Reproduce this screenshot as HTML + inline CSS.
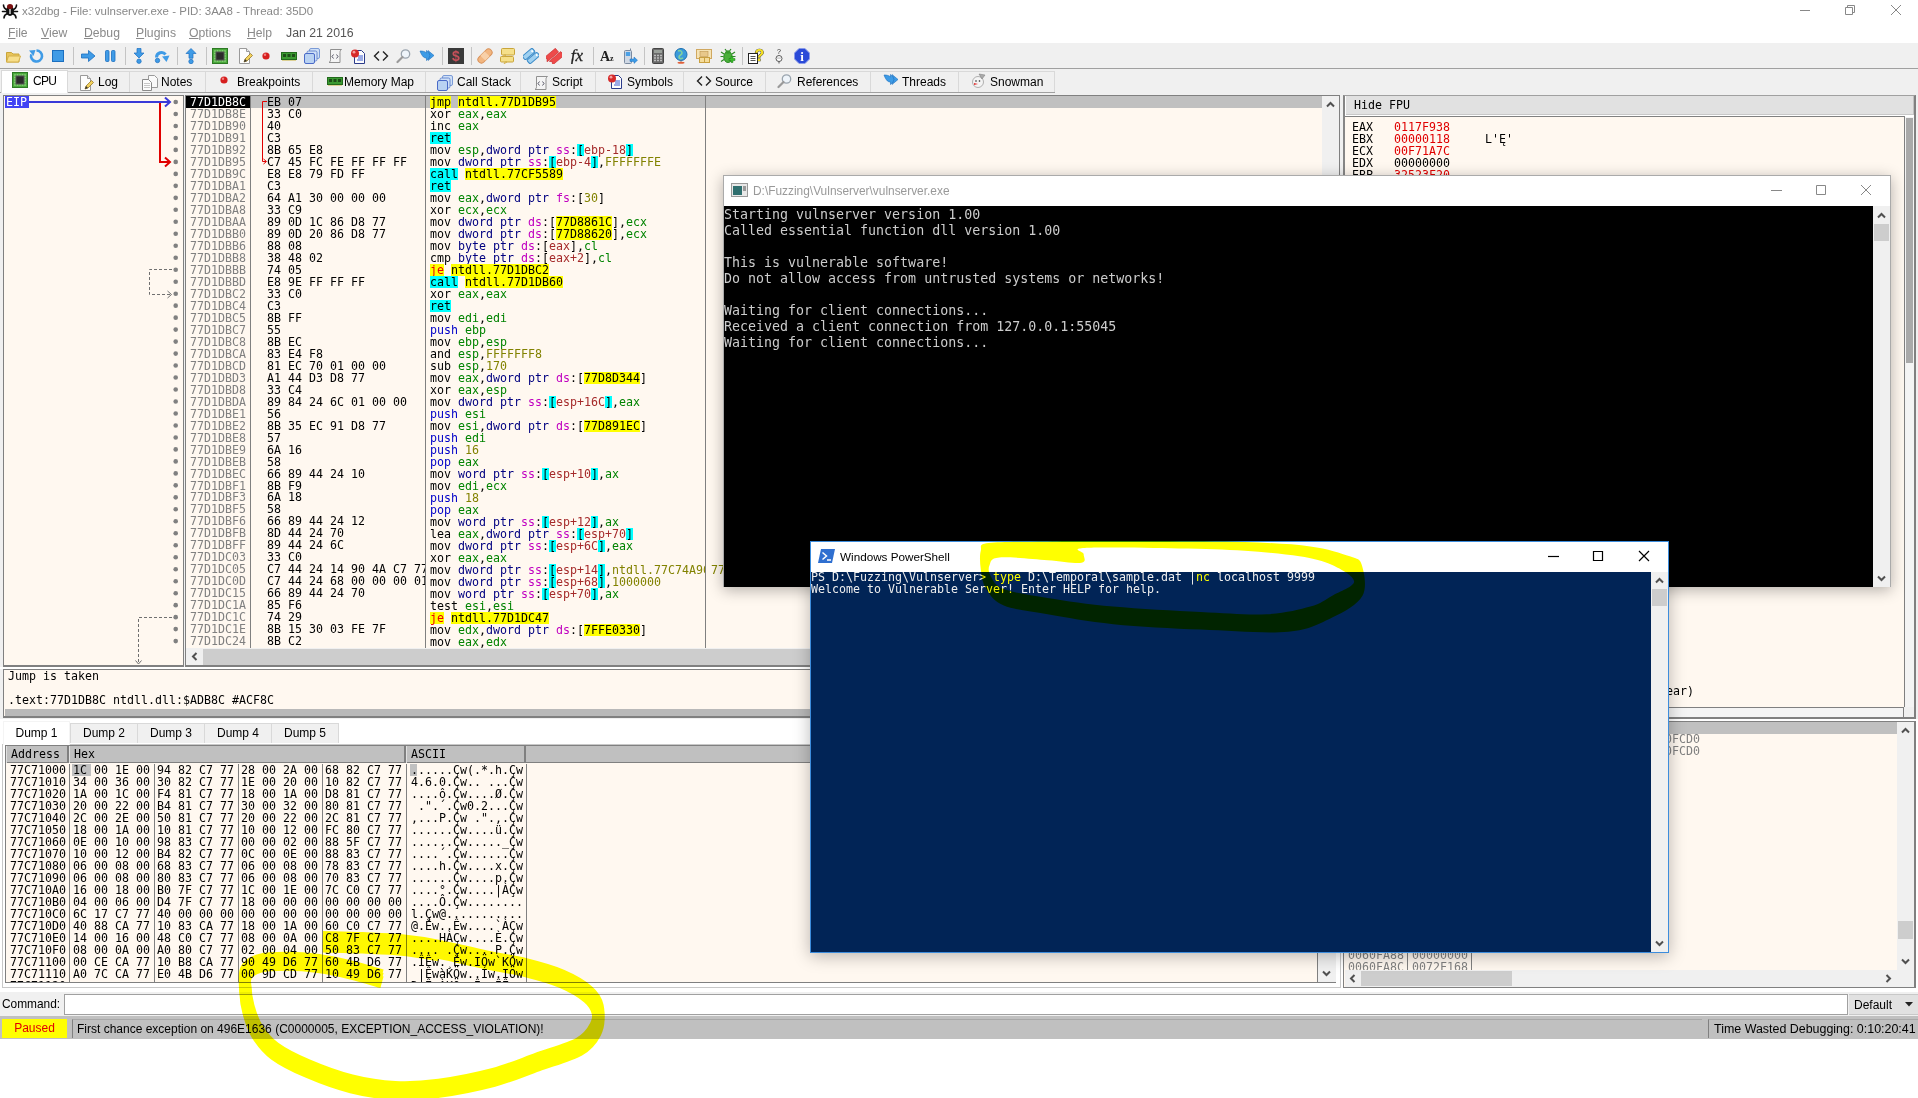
<!DOCTYPE html><html><head><meta charset="utf-8"><title>x32dbg</title><style>
*{box-sizing:border-box}
html,body{margin:0;padding:0}
body{width:1918px;height:1098px;overflow:hidden;background:#fff;position:relative;font-family:"Liberation Sans","DejaVu Sans",sans-serif;font-size:12px;color:#000}
.abs{position:absolute}
.mono{font-family:"DejaVu Sans Mono","Liberation Mono",monospace;font-size:11.63px;line-height:12px;white-space:pre;letter-spacing:0}
.ui{font-family:"Liberation Sans","DejaVu Sans",sans-serif;font-size:12px;white-space:pre}
.pane{position:absolute;background:#fff8f0}
.row{position:absolute;left:0;height:12px;white-space:pre}
.dis{line-height:11.98px}
.g{color:#808080}
.y,.c,.je{display:inline-block;height:12px;line-height:12px;vertical-align:top}
.y{background:#ffff00}
.c{background:#00ffff}
.p2{color:#000080}
.r{color:#008300}
.m{color:#c000c0}
.k{color:#828200}
.s{color:#a52a2a}
.p{color:#0000c8}
.je{color:#ef0000;background:#ffff00}
.tab{position:absolute;top:71px;height:21px;border:1px solid #d9d9d9;border-bottom:none;background:#f0f0f0;font-size:12px;line-height:20px;white-space:pre}
.tab.sel{top:70px;height:23px;background:#fff;border-color:#d9d9d9;z-index:2}
.dtab{position:absolute;top:723px;height:20px;border:1px solid #d9d9d9;border-bottom:none;background:#f0f0f0;font-size:12px;line-height:19px;text-align:center}
.hdr{position:absolute;background:#c0c0c0;border-right:2px solid #808080;height:16px}
.sb{position:absolute;background:#f0f0f0}
.thumb{position:absolute;background:#cdcdcd}
.con{font-family:"DejaVu Sans Mono","Liberation Mono",monospace;font-size:13.3px;line-height:16px;white-space:pre;color:#ccc}
</style></head><body><div class="abs" style="left:0;top:0;width:1918px;height:43px;background:#fff"></div>
<div class="abs ui" style="left:22px;top:5px;color:#888;font-size:11.5px">x32dbg - File: vulnserver.exe - PID: 3AA8 - Thread: 35D0</div>
<svg class="abs" style="left:1px;top:1px" width="18" height="18" viewBox="0 0 18 18"><g stroke="#111" stroke-width="1.6" fill="none" stroke-linecap="round"><path d="M2.500 4c0 3 1.500 4 4 5M15.500 4c0 3-1.500 4-4 5M1.500 10.500h4M16.500 10.500h-4M3 17c0-2.500 1-3.500 3.500-4.500M15 17c0-2.500-1-3.500-3.500-4.500"/></g><ellipse cx="9" cy="10" rx="4" ry="5" fill="#111"/><ellipse cx="9" cy="5.5" rx="3" ry="2.6" fill="#7a1010"/><rect x="8.3" y="8" width="1.4" height="5" fill="#ddd"/></svg>
<svg class="abs" style="left:1780px;top:0" width="138" height="22" viewBox="0 0 138 22" fill="none" stroke="#888" stroke-width="1"><path d="M20 10.5h10"/><path d="M65.5 7.5h7v7h-7zM67.5 7.5v-2h7v7h-2"/><path d="M111 5l10 10M121 5l-10 10"/></svg>
<div class="abs ui" style="left:8px;top:26px;color:#8a8a8a;font-size:12.2px"><u>F</u>ile</div>
<div class="abs ui" style="left:41px;top:26px;color:#8a8a8a;font-size:12.2px"><u>V</u>iew</div>
<div class="abs ui" style="left:84px;top:26px;color:#8a8a8a;font-size:12.2px"><u>D</u>ebug</div>
<div class="abs ui" style="left:136px;top:26px;color:#8a8a8a;font-size:12.2px"><u>P</u>lugins</div>
<div class="abs ui" style="left:189px;top:26px;color:#8a8a8a;font-size:12.2px"><u>O</u>ptions</div>
<div class="abs ui" style="left:247px;top:26px;color:#8a8a8a;font-size:12.2px"><u>H</u>elp</div>
<div class="abs ui" style="left:286px;top:26px;color:#555;font-size:12.3px">Jan 21 2016</div>
<div class="abs" style="left:0;top:43px;width:1918px;height:26px;background:#f0f0f0;border-bottom:1px solid #a0a0a0"></div>
<div class="abs" style="left:0;top:69px;width:1918px;height:971px;background:#f0f0f0"></div>
<svg class="abs" style="z-index:3;left:5px;top:48px" width="16" height="16" viewBox="0 0 16 16"><path d="M1.500 4.500h5l1.500 1.500h6v8h-12.500z" fill="#e8c45a" stroke="#c9a53a"/><path d="M1.500 14l2-6h12l-2 6z" fill="#f7de8a" stroke="#d4b04a"/></svg>
<svg class="abs" style="z-index:3;left:28px;top:48px" width="16" height="16" viewBox="0 0 16 16"><path d="M8.500 2.500a5.500 5.500 0 1 1-5.200 3.800" fill="none" stroke="#3f9be6" stroke-width="2.600"/><path d="M1 2.500l6.500-.5-2 6z" fill="#3f9be6"/></svg>
<svg class="abs" style="z-index:3;left:50px;top:48px" width="16" height="16" viewBox="0 0 16 16"><rect x="2.500" y="2.500" width="11" height="11" fill="#3f9be6" stroke="#1b6fc0"/></svg>
<div class="abs" style="left:73px;top:47px;width:1px;height:18px;background:#c4c4c4"></div>
<svg class="abs" style="z-index:3;left:80px;top:48px" width="16" height="16" viewBox="0 0 16 16"><path d="M1.500 6h7V2.500l6.500 5.500-6.500 5.500V10h-7z" fill="#3f9be6" stroke="#1b6fc0" stroke-width=".8"/></svg>
<svg class="abs" style="z-index:3;left:102px;top:48px" width="16" height="16" viewBox="0 0 16 16"><rect x="3.500" y="2.500" width="3.500" height="11" rx="1" fill="#3f9be6" stroke="#1b6fc0" stroke-width=".8"/><rect x="9.500" y="2.500" width="3.500" height="11" rx="1" fill="#3f9be6" stroke="#1b6fc0" stroke-width=".8"/></svg>
<div class="abs" style="left:125px;top:47px;width:1px;height:18px;background:#c4c4c4"></div>
<svg class="abs" style="z-index:3;left:131px;top:48px" width="16" height="16" viewBox="0 0 16 16"><path d="M6 .5h4v4.500h3l-5 5-5-5h3z" fill="#3f9be6" stroke="#1b6fc0" stroke-width=".7"/><circle cx="8" cy="13.200" r="2.200" fill="#3f9be6" stroke="#1b6fc0" stroke-width=".7"/></svg>
<svg class="abs" style="z-index:3;left:154px;top:48px" width="16" height="16" viewBox="0 0 16 16"><path d="M2.500 9.500a5 5 0 0 1 9-3" fill="none" stroke="#3f9be6" stroke-width="3"/><path d="M8 8.500l7.500-1-3 6.500z" fill="#3f9be6"/><circle cx="3.500" cy="12.500" r="2.200" fill="#3f9be6" stroke="#1b6fc0" stroke-width=".7"/></svg>
<div class="abs" style="left:177px;top:47px;width:1px;height:18px;background:#c4c4c4"></div>
<svg class="abs" style="z-index:3;left:183px;top:48px" width="16" height="16" viewBox="0 0 16 16"><path d="M6 10.200h4v-4.700h3l-5-5-5 5h3z" fill="#3f9be6" stroke="#1b6fc0" stroke-width=".7"/><circle cx="8" cy="13.500" r="2.200" fill="#3f9be6" stroke="#1b6fc0" stroke-width=".7"/></svg>
<div class="abs" style="left:206px;top:47px;width:1px;height:18px;background:#c4c4c4"></div>
<svg class="abs" style="z-index:3;left:212px;top:48px" width="16" height="16" viewBox="0 0 16 16"><rect x=".5" y=".5" width="15" height="15" fill="#4aa83c" stroke="#2d7a24"/><path d="M3 2v12M5.500 2v12M8 2v12M10.500 2v12M13 2v12M2 3h12M2 5.500h12M2 8h12M2 10.500h12M2 13h12" stroke="#8fd67f" stroke-width=".7"/><rect x="4" y="4" width="8" height="8" fill="#2b2b2b" stroke="#555"/></svg>
<svg class="abs" style="z-index:3;left:237px;top:48px" width="16" height="16" viewBox="0 0 16 16"><path d="M2.500 .5h7l3 3v12h-10z" fill="#fdfdfd" stroke="#9a9a9a"/><path d="M9.500 .5v3h3" fill="#e8e8e8" stroke="#9a9a9a"/><path d="M7 14l1-3 5.500-5.500 2 2-5.500 5.500z" fill="#f2d15c" stroke="#8a6a1a" stroke-width=".7"/><path d="M7 14l1-3 2 2z" fill="#333"/></svg>
<svg class="abs" style="z-index:3;left:258px;top:48px" width="16" height="16" viewBox="0 0 16 16"><circle cx="8" cy="8" r="3.600" fill="#d61f1f"/><circle cx="7" cy="6.800" r="1.200" fill="#f08080"/></svg>
<svg class="abs" style="z-index:3;left:281px;top:48px" width="16" height="16" viewBox="0 0 16 16"><rect x=".5" y="4.500" width="15" height="7" fill="#3b9a32" stroke="#226a1c"/><rect x="2" y="6" width="3" height="3" fill="#1d4d18"/><rect x="6.500" y="6" width="3" height="3" fill="#1d4d18"/><rect x="11" y="6" width="3" height="3" fill="#1d4d18"/><path d="M1.500 12.500h13" stroke="#c9b037" stroke-dasharray="1 1"/></svg>
<svg class="abs" style="z-index:3;left:304px;top:48px" width="16" height="16" viewBox="0 0 16 16"><rect x="5.500" y=".5" width="10" height="10" rx="1.500" fill="#cfe0f7" stroke="#7a9ad6"/><rect x="3" y="3" width="10" height="10" rx="1.500" fill="#cfe0f7" stroke="#6a8ad0"/><rect x=".5" y="5.500" width="10" height="10" rx="1.500" fill="#b9d2f2" stroke="#4a6ac8"/></svg>
<svg class="abs" style="z-index:3;left:327px;top:48px" width="16" height="16" viewBox="0 0 16 16"><path d="M3.500 1.500h11c-1.500 1-1.500 2-1.500 3v10h-11c1.500-1 1.500-2 1.500-3z" fill="#f4f4f4" stroke="#909090"/><path d="M6.500 6.500l-1.500 2 1.500 2M9.500 6.500l1.500 2-1.500 2" fill="none" stroke="#445" stroke-width=".9"/></svg>
<svg class="abs" style="z-index:3;left:350px;top:48px" width="16" height="16" viewBox="0 0 16 16"><path d="M4.500 2.500h7l3 3v10h-10z" fill="#fdfdfd" stroke="#2a3a8a"/><path d="M8 8h5M8 10h5M7 12h6" stroke="#3a5ad0"/><circle cx="5" cy="5.500" r="4" fill="#d62a2a"/><circle cx="4" cy="4.200" r="1.400" fill="#f4a0a0"/></svg>
<svg class="abs" style="z-index:3;left:373px;top:48px" width="16" height="16" viewBox="0 0 16 16"><path d="M6 3.500l-4.500 4.500 4.500 4.500M10 3.500l4.500 4.500-4.500 4.500" fill="none" stroke="#222" stroke-width="1.400"/></svg>
<svg class="abs" style="z-index:3;left:396px;top:48px" width="16" height="16" viewBox="0 0 16 16"><circle cx="9.500" cy="6" r="4.200" fill="#eef4fa" stroke="#9aa4ae" stroke-width="1.300"/><path d="M6.500 9l-5 5" stroke="#9a9a9a" stroke-width="2.200" stroke-linecap="round"/></svg>
<svg class="abs" style="z-index:3;left:419px;top:48px" width="16" height="16" viewBox="0 0 16 16"><path d="M1 3c3 0 5 .5 6.500 2V2.500l5 5-5 5V10c-2 0-4-.5-6.500-7z" fill="#3d9be6" stroke="#1b6fc0" stroke-width=".6"/><path d="M9 2.500l6 5-6 5 2-5z" fill="#3d9be6" stroke="#1b6fc0" stroke-width=".6"/></svg>
<div class="abs" style="left:442px;top:47px;width:1px;height:18px;background:#c4c4c4"></div>
<svg class="abs" style="z-index:3;left:448px;top:48px" width="16" height="16" viewBox="0 0 16 16"><rect x="0" y="0" width="16" height="16" fill="#3a3a3a"/><text x="8" y="13" font-family="Liberation Sans,sans-serif" font-weight="bold" font-size="14" text-anchor="middle" fill="#c8505a">$</text></svg>
<div class="abs" style="left:471px;top:47px;width:1px;height:18px;background:#c4c4c4"></div>
<svg class="abs" style="z-index:3;left:477px;top:48px" width="16" height="16" viewBox="0 0 16 16"><g transform="rotate(-45 8 8)"><rect x="-.5" y="4.500" width="17" height="7" rx="3.500" fill="#f2b680" stroke="#d8925a"/><rect x="5" y="4.500" width="6" height="7" fill="#f8d0a8"/></g></svg>
<svg class="abs" style="z-index:3;left:500px;top:48px" width="16" height="16" viewBox="0 0 16 16"><rect x="1.500" y=".5" width="13" height="6.500" rx="1" fill="#f5e08a" stroke="#c9a53a"/><rect x=".5" y="8.500" width="13" height="5.500" rx="1" fill="#f5e08a" stroke="#c9a53a"/><path d="M4 7l-1 2 3-2zM5 14l-1 2 3-2z" fill="#f5e08a" stroke="#c9a53a" stroke-width=".6"/></svg>
<svg class="abs" style="z-index:3;left:523px;top:48px" width="16" height="16" viewBox="0 0 16 16"><g transform="rotate(-40 8 8)"><rect x="1" y="2.500" width="13" height="5" rx="1.500" fill="#9fd0f0" stroke="#3a8ac8"/><rect x="2" y="8.500" width="13" height="5" rx="1.500" fill="#9fd0f0" stroke="#3a8ac8"/><circle cx="12" cy="5" r="1" fill="#fff"/><circle cx="13" cy="11" r="1" fill="#fff"/></g></svg>
<svg class="abs" style="z-index:3;left:546px;top:48px" width="16" height="16" viewBox="0 0 16 16"><g transform="rotate(-40 8 8)"><path d="M-1 3h15v5h-15l2-2.500z" fill="#ee4a4a" stroke="#c82a2a" stroke-width=".6"/><path d="M1 9h15v5h-15l2-2.500z" fill="#ee4a4a" stroke="#c82a2a" stroke-width=".6"/></g></svg>
<svg class="abs" style="z-index:3;left:569px;top:48px" width="16" height="16" viewBox="0 0 16 16"><text x="8" y="13" font-family="Liberation Serif,serif" font-style="italic" font-size="17" text-anchor="middle" fill="#222" stroke="#222" stroke-width=".3">fx</text></svg>
<div class="abs" style="left:593px;top:47px;width:1px;height:18px;background:#c4c4c4"></div>
<svg class="abs" style="z-index:3;left:598px;top:48px" width="16" height="16" viewBox="0 0 16 16"><text x="2" y="13" font-family="Liberation Serif,serif" font-weight="bold" font-size="14" fill="#222">A</text><text x="12" y="13" font-family="Liberation Serif,serif" font-weight="bold" font-size="8" fill="#222">z</text></svg>
<svg class="abs" style="z-index:3;left:622px;top:48px" width="16" height="16" viewBox="0 0 16 16"><rect x="2.500" y="2.500" width="7" height="13" rx="1" fill="#cfd8e4" stroke="#7a8aa0"/><rect x="3.800" y="4" width="4.400" height="4" fill="#4aa0e6"/><path d="M8.500 2.500v-2" stroke="#7a8aa0"/><path d="M8 11h4v-2l3.500 3.200-3.500 3.200v-2h-4z" fill="#3d9be6" stroke="#1b6fc0" stroke-width=".5"/></svg>
<div class="abs" style="left:644px;top:47px;width:1px;height:18px;background:#c4c4c4"></div>
<svg class="abs" style="z-index:3;left:650px;top:48px" width="16" height="16" viewBox="0 0 16 16"><rect x="2.500" y=".5" width="11" height="15" rx="1" fill="#6a6a6a" stroke="#444"/><rect x="4" y="2" width="8" height="3" fill="#9aa09a"/><path d="M4 7.500h8M4 10h8M4 12.500h8" stroke="#bdbdbd" stroke-width="1.400" stroke-dasharray="2 1"/></svg>
<svg class="abs" style="z-index:3;left:673px;top:48px" width="16" height="16" viewBox="0 0 16 16"><circle cx="8" cy="6.500" r="6" fill="#3a9ada" stroke="#1b6fb0"/><path d="M5 3c2-1 4 0 4 2s-3 2-3 4 2 2 4 1" fill="none" stroke="#7fd0a0" stroke-width="1.600"/><path d="M8 12.500v1.500" stroke="#888"/><ellipse cx="8" cy="14.700" rx="3.500" ry="1" fill="#e0603a"/></svg>
<svg class="abs" style="z-index:3;left:696px;top:48px" width="16" height="16" viewBox="0 0 16 16"><rect x=".5" y="1.500" width="15" height="9" fill="#f5e3b5" stroke="#d0a860"/><rect x="4" y="3.500" width="8" height="5" fill="#e8c88a" stroke="#c09850" stroke-width=".6"/><rect x="3.500" y="9.500" width="5" height="5" fill="#f5dc9a" stroke="#c9a040"/><rect x="8.500" y="9.500" width="5" height="5" fill="#f5dc9a" stroke="#c9a040"/></svg>
<svg class="abs" style="z-index:3;left:720px;top:48px" width="16" height="16" viewBox="0 0 16 16"><g stroke="#2d8a24" stroke-width="1.200" fill="none"><path d="M1 4l3 2M15 4l-3 2M.5 8.500h3M15.500 8.500h-3M1 13.500l3-2M5 1l1.500 2M11 1l-1.500 2"/></g><ellipse cx="8" cy="9" rx="4.200" ry="5.500" fill="#4ab03a" stroke="#2d8a24"/><ellipse cx="8" cy="4" rx="2.600" ry="1.800" fill="#3a9a2e"/><path d="M11 10.500h2v-2h2v2h2v2h-2v2h-2v-2h-2z" transform="translate(-2 0)" fill="#3ac02a" stroke="#1d7a18" stroke-width=".5"/></svg>
<div class="abs" style="left:742px;top:47px;width:1px;height:18px;background:#c4c4c4"></div>
<svg class="abs" style="z-index:3;left:748px;top:48px" width="16" height="16" viewBox="0 0 16 16"><rect x=".5" y="5.500" width="9" height="10" fill="#fff" stroke="#222"/><path d="M2.500 8.500h5M2.500 10.500h5M2.500 12.500h5" stroke="#555"/><text x="11.500" y="12.500" font-family="Liberation Sans,sans-serif" font-weight="bold" font-size="16" text-anchor="middle" fill="#f5e020" stroke="#222" stroke-width=".7" paint-order="stroke">?</text></svg>
<svg class="abs" style="z-index:3;left:771px;top:48px" width="16" height="16" viewBox="0 0 16 16"><text x="8" y="6" font-family="Liberation Sans,sans-serif" font-size="7" text-anchor="middle" fill="#222">?</text><circle cx="8" cy="10.500" r="3" fill="#fff" stroke="#333" stroke-width=".8"/><circle cx="7" cy="10" r=".5" fill="#333"/><circle cx="9" cy="10" r=".5" fill="#333"/><path d="M8 13.500v2" stroke="#333" stroke-width=".8"/></svg>
<svg class="abs" style="z-index:3;left:794px;top:48px" width="16" height="16" viewBox="0 0 16 16"><path d="M5 .5h6l4.500 4.500v6l-4.500 4.500h-6l-4.500-4.500v-6z" fill="#2a4ad8" stroke="#8a9ae8"/><text x="8" y="13" font-family="Liberation Serif,serif" font-weight="bold" font-size="13" text-anchor="middle" fill="#fff">i</text></svg>
<div class="abs" style="left:0;top:92px;width:1055px;height:1px;background:#a0a0a0;z-index:1"></div>
<div class="tab sel" style="left:1px;width:67px;padding-left:31px;letter-spacing:-.7px">CPU</div>
<div class="tab" style="left:66px;width:64px;padding-left:31px">Log</div>
<div class="tab" style="left:129px;width:77px;padding-left:31px">Notes</div>
<div class="tab" style="left:205px;width:108px;padding-left:31px">Breakpoints</div>
<div class="tab" style="left:312px;width:114px;padding-left:31px">Memory Map</div>
<div class="tab" style="left:425px;width:96px;padding-left:31px">Call Stack</div>
<div class="tab" style="left:520px;width:76px;padding-left:31px">Script</div>
<div class="tab" style="left:595px;width:89px;padding-left:31px">Symbols</div>
<div class="tab" style="left:683px;width:83px;padding-left:31px">Source</div>
<div class="tab" style="left:765px;width:106px;padding-left:31px">References</div>
<div class="tab" style="left:870px;width:89px;padding-left:31px">Threads</div>
<div class="tab" style="left:958px;width:97px;padding-left:31px">Snowman</div>
<svg class="abs" style="z-index:3;left:12px;top:72px" width="16" height="16" viewBox="0 0 16 16"><rect x=".5" y=".5" width="15" height="15" fill="#4aa83c" stroke="#2d7a24"/><path d="M3 2v12M5.500 2v12M8 2v12M10.500 2v12M13 2v12M2 3h12M2 5.500h12M2 8h12M2 10.500h12M2 13h12" stroke="#8fd67f" stroke-width=".7"/><rect x="4" y="4" width="8" height="8" fill="#2b2b2b" stroke="#555"/></svg>
<svg class="abs" style="z-index:3;left:78px;top:75px" width="16" height="16" viewBox="0 0 16 16"><path d="M2.500 .5h7l3 3v12h-10z" fill="#fdfdfd" stroke="#9a9a9a"/><path d="M9.500 .5v3h3" fill="#e8e8e8" stroke="#9a9a9a"/><path d="M7 14l1-3 5.500-5.500 2 2-5.500 5.500z" fill="#f2d15c" stroke="#8a6a1a" stroke-width=".7"/><path d="M7 14l1-3 2 2z" fill="#333"/></svg>
<svg class="abs" style="z-index:3;left:142px;top:75px" width="16" height="16" viewBox="0 0 16 16"><path d="M6.500 .5h6l3 3v9h-9z" fill="#fafafa" stroke="#9a9a9a"/><path d="M.5 4.500h6l3 3v8h-9z" fill="#fdfdfd" stroke="#8a8a8a"/><path d="M2 8.500h6M2 10.500h6M2 12.500h6" stroke="#b0b0b0" stroke-width=".7"/></svg>
<svg class="abs" style="z-index:3;left:216px;top:72px" width="16" height="16" viewBox="0 0 16 16"><circle cx="8" cy="8" r="3.600" fill="#d61f1f"/><circle cx="7" cy="6.800" r="1.200" fill="#f08080"/></svg>
<svg class="abs" style="z-index:3;left:327px;top:73px" width="16" height="16" viewBox="0 0 16 16"><rect x=".5" y="4.500" width="15" height="7" fill="#3b9a32" stroke="#226a1c"/><rect x="2" y="6" width="3" height="3" fill="#1d4d18"/><rect x="6.500" y="6" width="3" height="3" fill="#1d4d18"/><rect x="11" y="6" width="3" height="3" fill="#1d4d18"/><path d="M1.500 12.500h13" stroke="#c9b037" stroke-dasharray="1 1"/></svg>
<svg class="abs" style="z-index:3;left:437px;top:75px" width="16" height="16" viewBox="0 0 16 16"><rect x="5.500" y=".5" width="10" height="10" rx="1.500" fill="#cfe0f7" stroke="#7a9ad6"/><rect x="3" y="3" width="10" height="10" rx="1.500" fill="#cfe0f7" stroke="#6a8ad0"/><rect x=".5" y="5.500" width="10" height="10" rx="1.500" fill="#b9d2f2" stroke="#4a6ac8"/></svg>
<svg class="abs" style="z-index:3;left:533px;top:75px" width="16" height="16" viewBox="0 0 16 16"><path d="M3.500 1.500h11c-1.500 1-1.500 2-1.500 3v10h-11c1.500-1 1.500-2 1.500-3z" fill="#f4f4f4" stroke="#909090"/><path d="M6.500 6.500l-1.500 2 1.500 2M9.500 6.500l1.500 2-1.500 2" fill="none" stroke="#445" stroke-width=".9"/></svg>
<svg class="abs" style="z-index:3;left:607px;top:73px" width="16" height="16" viewBox="0 0 16 16"><path d="M4.500 2.500h7l3 3v10h-10z" fill="#fdfdfd" stroke="#2a3a8a"/><path d="M8 8h5M8 10h5M7 12h6" stroke="#3a5ad0"/><circle cx="5" cy="5.500" r="4" fill="#d62a2a"/><circle cx="4" cy="4.200" r="1.400" fill="#f4a0a0"/></svg>
<svg class="abs" style="z-index:3;left:696px;top:73px" width="16" height="16" viewBox="0 0 16 16"><path d="M6 3.500l-4.500 4.500 4.500 4.500M10 3.500l4.500 4.500-4.500 4.500" fill="none" stroke="#222" stroke-width="1.400"/></svg>
<svg class="abs" style="z-index:3;left:777px;top:73px" width="16" height="16" viewBox="0 0 16 16"><circle cx="9.500" cy="6" r="4.200" fill="#eef4fa" stroke="#9aa4ae" stroke-width="1.300"/><path d="M6.500 9l-5 5" stroke="#9a9a9a" stroke-width="2.200" stroke-linecap="round"/></svg>
<svg class="abs" style="z-index:3;left:883px;top:72px" width="16" height="16" viewBox="0 0 16 16"><path d="M1 3c3 0 5 .5 6.500 2V2.500l5 5-5 5V10c-2 0-4-.5-6.500-7z" fill="#3d9be6" stroke="#1b6fc0" stroke-width=".6"/><path d="M9 2.500l6 5-6 5 2-5z" fill="#3d9be6" stroke="#1b6fc0" stroke-width=".6"/></svg>
<svg class="abs" style="z-index:3;left:971px;top:73px" width="16" height="16" viewBox="0 0 16 16"><circle cx="7" cy="9" r="5.500" fill="#f4f4f4" stroke="#b0b0b0"/><path d="M8 1l6 1-3 4z" fill="#aaa" stroke="#777" stroke-width=".5"/><circle cx="5" cy="8" r=".8" fill="#222"/><circle cx="8.500" cy="8" r=".8" fill="#222"/><path d="M3 10l4 1-4 1z" fill="#e03030"/></svg>
<div class="pane" style="left:3px;top:95px;width:181px;height:572px;border:1px solid #808080;border-bottom:2px solid #808080"></div>
<div class="pane" style="left:185px;top:95px;width:1155px;height:572px;border:1px solid #808080;border-bottom:2px solid #808080"></div>
<div class="abs" style="left:186px;top:96px;width:1136px;height:12px;background:#c0c0c0"></div>
<div class="abs" style="left:186px;top:96px;width:64px;height:12px;background:#000"></div>
<div class="abs" style="left:250px;top:96px;width:1px;height:552px;background:#808080"></div>
<div class="abs" style="left:425px;top:96px;width:1px;height:552px;background:#808080"></div>
<div class="abs" style="left:705px;top:96px;width:1px;height:552px;background:#808080"></div>
<div class="abs mono dis g" style="left:190px;top:96px;width:60px"><span style="color:#fff">77D1DB8C</span>
77D1DB8E
77D1DB90
77D1DB91
77D1DB92
77D1DB95
77D1DB9C
77D1DBA1
77D1DBA2
77D1DBA8
77D1DBAA
77D1DBB0
77D1DBB6
77D1DBB8
77D1DBBB
77D1DBBD
77D1DBC2
77D1DBC4
77D1DBC5
77D1DBC7
77D1DBC8
77D1DBCA
77D1DBCD
77D1DBD3
77D1DBD8
77D1DBDA
77D1DBE1
77D1DBE2
77D1DBE8
77D1DBE9
77D1DBEB
77D1DBEC
77D1DBF1
77D1DBF3
77D1DBF5
77D1DBF6
77D1DBFB
77D1DBFF
77D1DC03
77D1DC05
77D1DC0D
77D1DC15
77D1DC1A
77D1DC1C
77D1DC1E
77D1DC24</div>
<div class="abs mono dis" style="left:267px;top:96px;width:158px;overflow:hidden">EB 07
33 C0
40
C3
8B 65 E8
C7 45 FC FE FF FF FF
E8 E8 79 FD FF
C3
64 A1 30 00 00 00
33 C9
89 0D 1C 86 D8 77
89 0D 20 86 D8 77
88 08
38 48 02
74 05
E8 9E FF FF FF
33 C0
C3
8B FF
55
8B EC
83 E4 F8
81 EC 70 01 00 00
A1 44 D3 D8 77
33 C4
89 84 24 6C 01 00 00
56
8B 35 EC 91 D8 77
57
6A 16
58
66 89 44 24 10
8B F9
6A 18
58
66 89 44 24 12
8D 44 24 70
89 44 24 6C
33 C0
C7 44 24 14 90 4A C7 77
C7 44 24 68 00 00 00 01
66 89 44 24 70
85 F6
74 29
8B 15 30 03 FE 7F
8B C2</div>
<div class="abs mono dis" style="left:430px;top:96px;width:275px;overflow:hidden;color:#000"><span class="y">jmp</span> <span class="y">ntdll.77D1DB95</span>
xor <span class="r">eax</span>,<span class="r">eax</span>
inc <span class="r">eax</span>
<span class="c">ret</span>
mov <span class="r">esp</span>,<span class="p2">dword ptr </span><span class="m">ss</span>:<span class="c">[</span><span class="s">ebp-18</span><span class="c">]</span>
mov <span class="p2">dword ptr </span><span class="m">ss</span>:<span class="c">[</span><span class="s">ebp-4</span><span class="c">]</span>,<span class="k">FFFFFFFE</span>
<span class="c">call</span> <span class="y">ntdll.77CF5589</span>
<span class="c">ret</span>
mov <span class="r">eax</span>,<span class="p2">dword ptr </span><span class="m">fs</span>:[<span class="k">30</span>]
xor <span class="r">ecx</span>,<span class="r">ecx</span>
mov <span class="p2">dword ptr </span><span class="m">ds</span>:[<span class="y">77D8861C</span>],<span class="r">ecx</span>
mov <span class="p2">dword ptr </span><span class="m">ds</span>:[<span class="y">77D88620</span>],<span class="r">ecx</span>
mov <span class="p2">byte ptr </span><span class="m">ds</span>:[<span class="s">eax</span>],<span class="r">cl</span>
cmp <span class="p2">byte ptr </span><span class="m">ds</span>:[<span class="s">eax+2</span>],<span class="r">cl</span>
<span class="je">je</span> <span class="y">ntdll.77D1DBC2</span>
<span class="c">call</span> <span class="y">ntdll.77D1DB60</span>
xor <span class="r">eax</span>,<span class="r">eax</span>
<span class="c">ret</span>
mov <span class="r">edi</span>,<span class="r">edi</span>
<span class="p">push</span> <span class="r">ebp</span>
mov <span class="r">ebp</span>,<span class="r">esp</span>
and <span class="r">esp</span>,<span class="k">FFFFFFF8</span>
sub <span class="r">esp</span>,<span class="k">170</span>
mov <span class="r">eax</span>,<span class="p2">dword ptr </span><span class="m">ds</span>:[<span class="y">77D8D344</span>]
xor <span class="r">eax</span>,<span class="r">esp</span>
mov <span class="p2">dword ptr </span><span class="m">ss</span>:<span class="c">[</span><span class="s">esp+16C</span><span class="c">]</span>,<span class="r">eax</span>
<span class="p">push</span> <span class="r">esi</span>
mov <span class="r">esi</span>,<span class="p2">dword ptr </span><span class="m">ds</span>:[<span class="y">77D891EC</span>]
<span class="p">push</span> <span class="r">edi</span>
<span class="p">push</span> <span class="k">16</span>
<span class="p">pop</span> <span class="r">eax</span>
mov <span class="p2">word ptr </span><span class="m">ss</span>:<span class="c">[</span><span class="s">esp+10</span><span class="c">]</span>,<span class="r">ax</span>
mov <span class="r">edi</span>,<span class="r">ecx</span>
<span class="p">push</span> <span class="k">18</span>
<span class="p">pop</span> <span class="r">eax</span>
mov <span class="p2">word ptr </span><span class="m">ss</span>:<span class="c">[</span><span class="s">esp+12</span><span class="c">]</span>,<span class="r">ax</span>
lea <span class="r">eax</span>,<span class="p2">dword ptr </span><span class="m">ss</span>:<span class="c">[</span><span class="s">esp+70</span><span class="c">]</span>
mov <span class="p2">dword ptr </span><span class="m">ss</span>:<span class="c">[</span><span class="s">esp+6C</span><span class="c">]</span>,<span class="r">eax</span>
xor <span class="r">eax</span>,<span class="r">eax</span>
mov <span class="p2">dword ptr </span><span class="m">ss</span>:<span class="c">[</span><span class="s">esp+14</span><span class="c">]</span>,<span class="k">ntdll.77C74A90</span>
mov <span class="p2">dword ptr </span><span class="m">ss</span>:<span class="c">[</span><span class="s">esp+68</span><span class="c">]</span>,<span class="k">1000000</span>
mov <span class="p2">word ptr </span><span class="m">ss</span>:<span class="c">[</span><span class="s">esp+70</span><span class="c">]</span>,<span class="r">ax</span>
test <span class="r">esi</span>,<span class="r">esi</span>
<span class="je">je</span> <span class="y">ntdll.77D1DC47</span>
mov <span class="r">edx</span>,<span class="p2">dword ptr </span><span class="m">ds</span>:[<span class="y">7FFE0330</span>]
mov <span class="r">eax</span>,<span class="r">edx</span></div>
<div class="abs mono k" style="left:711px;top:564px">77</div>
<svg class="abs" style="left:4px;top:96px" width="179" height="569" viewBox="0 0 179 569"><circle cx="171.700" cy="6" r="2.3" fill="#808080"/><circle cx="171.700" cy="17.98" r="2.3" fill="#808080"/><circle cx="171.700" cy="29.96" r="2.3" fill="#808080"/><circle cx="171.700" cy="41.94" r="2.3" fill="#808080"/><circle cx="171.700" cy="53.92" r="2.3" fill="#808080"/><circle cx="171.700" cy="65.9" r="2.3" fill="#808080"/><circle cx="171.700" cy="77.88" r="2.3" fill="#808080"/><circle cx="171.700" cy="89.86" r="2.3" fill="#808080"/><circle cx="171.700" cy="101.84" r="2.3" fill="#808080"/><circle cx="171.700" cy="113.82" r="2.3" fill="#808080"/><circle cx="171.700" cy="125.8" r="2.3" fill="#808080"/><circle cx="171.700" cy="137.78" r="2.3" fill="#808080"/><circle cx="171.700" cy="149.76" r="2.3" fill="#808080"/><circle cx="171.700" cy="161.74" r="2.3" fill="#808080"/><circle cx="171.700" cy="173.72" r="2.3" fill="#808080"/><circle cx="171.700" cy="185.7" r="2.3" fill="#808080"/><circle cx="171.700" cy="197.68" r="2.3" fill="#808080"/><circle cx="171.700" cy="209.66" r="2.3" fill="#808080"/><circle cx="171.700" cy="221.64" r="2.3" fill="#808080"/><circle cx="171.700" cy="233.62" r="2.3" fill="#808080"/><circle cx="171.700" cy="245.6" r="2.3" fill="#808080"/><circle cx="171.700" cy="257.58" r="2.3" fill="#808080"/><circle cx="171.700" cy="269.56" r="2.3" fill="#808080"/><circle cx="171.700" cy="281.54" r="2.3" fill="#808080"/><circle cx="171.700" cy="293.52" r="2.3" fill="#808080"/><circle cx="171.700" cy="305.5" r="2.3" fill="#808080"/><circle cx="171.700" cy="317.48" r="2.3" fill="#808080"/><circle cx="171.700" cy="329.46" r="2.3" fill="#808080"/><circle cx="171.700" cy="341.44" r="2.3" fill="#808080"/><circle cx="171.700" cy="353.42" r="2.3" fill="#808080"/><circle cx="171.700" cy="365.4" r="2.3" fill="#808080"/><circle cx="171.700" cy="377.38" r="2.3" fill="#808080"/><circle cx="171.700" cy="389.36" r="2.3" fill="#808080"/><circle cx="171.700" cy="401.34" r="2.3" fill="#808080"/><circle cx="171.700" cy="413.32" r="2.3" fill="#808080"/><circle cx="171.700" cy="425.3" r="2.3" fill="#808080"/><circle cx="171.700" cy="437.28" r="2.3" fill="#808080"/><circle cx="171.700" cy="449.26" r="2.3" fill="#808080"/><circle cx="171.700" cy="461.24" r="2.3" fill="#808080"/><circle cx="171.700" cy="473.22" r="2.3" fill="#808080"/><circle cx="171.700" cy="485.2" r="2.3" fill="#808080"/><circle cx="171.700" cy="497.18" r="2.3" fill="#808080"/><circle cx="171.700" cy="509.16" r="2.3" fill="#808080"/><circle cx="171.700" cy="521.14" r="2.3" fill="#808080"/><circle cx="171.700" cy="533.12" r="2.3" fill="#808080"/><circle cx="171.700" cy="545.1" r="2.3" fill="#808080"/><rect x="1" y="0" width="24" height="12" fill="#4242f4"/><path d="M25 6H165" stroke="#3a3ad8" stroke-width="2" fill="none"/><path d="M161 1.5l5 4.5-5 4.5" stroke="#3a3ad8" stroke-width="2" fill="none"/><path d="M156 7V66H165" stroke="#e00000" stroke-width="2" fill="none"/><path d="M161 61.5l5 4.5-5 4.5" stroke="#e00000" stroke-width="2" fill="none"/><path d="M168 173.500H145.500V198.500H166" stroke="#707070" stroke-width="1" stroke-dasharray="3 2" fill="none"/><path d="M163.500 195l4 3.500-4 3.500" stroke="#707070" fill="none"/><path d="M168 521.500H134.500V568" stroke="#707070" stroke-width="1" stroke-dasharray="3 2" fill="none"/><path d="M131.500 564.500l3 3.500 3-3.500" stroke="#707070" fill="none"/></svg>
<div class="abs mono" style="left:6px;top:96px;color:#fff">EIP</div>
<svg class="abs" style="left:255px;top:96px" width="14" height="72" viewBox="0 0 14 72"><path d="M12 5.5H7.500V65.500H11" stroke="#e00000" fill="none"/><path d="M8.500 63l3 2.500-3 2.500" stroke="#e00000" fill="none"/></svg>
<div class="sb" style="left:1322px;top:96px;width:17px;height:552px"></div>
<div class="sb" style="left:186px;top:648px;width:1153px;height:17px"></div>
<div class="thumb" style="left:203px;top:649px;width:1102px;height:16px"></div>
<svg class="abs" style="left:1322px;top:96px" width="17" height="17" viewBox="0 0 17 17"><path d="M5 10.500l3.500-3.500 3.500 3.500" stroke="#505050" stroke-width="2" fill="none"/></svg>
<svg class="abs" style="left:186px;top:648px" width="17" height="17" viewBox="0 0 17 17"><path d="M10.500 5l-3.500 3.500 3.500 3.500" stroke="#505050" stroke-width="2" fill="none"/></svg>
<div class="abs" style="left:0;top:667px;width:1342px;height:2px;background:#fff"></div>
<div class="pane" style="left:3px;top:669px;width:1337px;height:49px;border:1px solid #808080;border-bottom:2px solid #808080"></div>
<div class="abs mono" style="left:8px;top:670px">Jump is taken

.text:77D1DB8C ntdll.dll:$ADB8C #ACF8C</div>
<div class="abs" style="left:5px;top:709px;width:1334px;height:7px;background:#b9b9b9"></div>
<div class="abs" style="left:1343px;top:95px;width:573px;height:624px;background:#fff;border-left:2px solid #868686;border-top:1px solid #a0a0a0;border-bottom:2px solid #808080;border-right:2px solid #808080"></div>
<div class="abs mono" style="left:1346px;top:96px;width:568px;height:19px;background:#e1e1e1;border-bottom:1px solid #c8c8c8;border-right:1px solid #c0c0c0;padding:3px 0 0 8px">Hide FPU</div>
<div class="pane" style="left:1345px;top:116px;width:560px;height:592px;border-top:1px solid #808080"></div>
<div class="abs mono" style="left:1352px;top:121px">EAX   <span style="color:#e00000">0117F938</span>
EBX   <span style="color:#e00000">00000118</span>     L'Ę'
ECX   <span style="color:#e00000">00F71A7C</span>
EDX   00000000
EBP   <span style="color:#e00000">32523F20</span></div>
<div class="abs mono" style="left:1659px;top:685px">lear)</div>
<div class="abs" style="left:1904px;top:117px;width:10px;height:590px;background:#f4f4f4;border-left:1px solid #808080"></div>
<div class="abs" style="left:1906px;top:118px;width:7px;height:245px;background:#a9a9a9"></div>
<div class="abs" style="left:1345px;top:707px;width:559px;height:10px;background:#f4f4f4;border-top:1px solid #808080;border-right:1px solid #808080"></div>
<div class="abs" style="left:1904px;top:707px;width:10px;height:10px;background:#f0f0f0"></div>
<div class="abs" style="left:0px;top:719px;width:1918px;height:273px;background:#fff"></div>
<div class="abs" style="left:2px;top:744px;width:1339px;height:244px;background:#fff;border:1px solid #c8c8c8"></div>
<div class="dtab" style="left:3px;width:67px;top:721px;height:24px;background:#fff;line-height:22px;border-color:#f4f4f4">Dump 1</div>
<div class="dtab" style="left:70px;width:68px">Dump 2</div>
<div class="dtab" style="left:137px;width:68px">Dump 3</div>
<div class="dtab" style="left:204px;width:68px">Dump 4</div>
<div class="dtab" style="left:271px;width:68px">Dump 5</div>
<div class="pane" style="left:5px;top:745px;width:1331px;height:238px;border:1px solid #808080"></div>
<div class="abs" style="left:6px;top:746px;width:1312px;height:17px;background:#c0c0c0;border-bottom:1px solid #808080"></div>
<div class="abs mono" style="left:6px;top:746px;width:63px;height:17px;border-right:2px solid #808080;border-left:1px solid #e0e0e0;padding:2px 0 0 4px">Address</div>
<div class="abs mono" style="left:69px;top:746px;width:337px;height:17px;border-right:2px solid #808080;border-left:1px solid #e0e0e0;padding:2px 0 0 4px">Hex</div>
<div class="abs mono" style="left:406px;top:746px;width:120px;height:17px;border-right:2px solid #808080;border-left:1px solid #e0e0e0;padding:2px 0 0 4px">ASCII</div>
<div class="abs" style="left:72px;top:764px;width:19px;height:12px;background:#c0c0c0"></div>
<div class="abs" style="left:410px;top:764px;width:7px;height:12px;background:#c0c0c0"></div>
<div class="abs mono" style="left:10px;top:764px;height:218px;overflow:hidden">77C71000
77C71010
77C71020
77C71030
77C71040
77C71050
77C71060
77C71070
77C71080
77C71090
77C710A0
77C710B0
77C710C0
77C710D0
77C710E0
77C710F0
77C71100
77C71110
77C71120</div>
<div class="abs mono" style="left:73px;top:764px;height:218px;overflow:hidden">1C 00 1E 00
34 00 36 00
1A 00 1C 00
20 00 22 00
2C 00 2E 00
18 00 1A 00
0E 00 10 00
10 00 12 00
06 00 08 00
06 00 08 00
16 00 18 00
04 00 06 00
6C 17 C7 77
40 88 CA 77
14 00 16 00
08 00 0A 00
00 CE CA 77
A0 7C CA 77</div>
<div class="abs mono" style="left:157px;top:764px;height:218px;overflow:hidden">94 82 C7 77
30 82 C7 77
F4 81 C7 77
B4 81 C7 77
50 81 C7 77
10 81 C7 77
98 83 C7 77
B4 82 C7 77
68 83 C7 77
80 83 C7 77
B0 7F C7 77
D4 7F C7 77
40 00 00 00
10 83 CA 77
48 C0 C7 77
A0 80 C7 77
10 B8 CA 77
E0 4B D6 77</div>
<div class="abs mono" style="left:241px;top:764px;height:218px;overflow:hidden">28 00 2A 00
1E 00 20 00
18 00 1A 00
30 00 32 00
20 00 22 00
10 00 12 00
00 00 02 00
0C 00 0E 00
06 00 08 00
06 00 08 00
1C 00 1E 00
18 00 00 00
00 00 00 00
18 00 1A 00
08 00 0A 00
02 00 04 00
90 49 D6 77
00 9D CD 77</div>
<div class="abs mono" style="left:325px;top:764px;height:218px;overflow:hidden">68 82 C7 77
10 82 C7 77
D8 81 C7 77
80 81 C7 77
2C 81 C7 77
FC 80 C7 77
88 5F C7 77
88 83 C7 77
78 83 C7 77
70 83 C7 77
7C C0 C7 77
00 00 00 00
00 00 00 00
60 C0 C7 77
C8 7F C7 77
50 83 C7 77
60 4B D6 77
10 49 D6 77</div>
<div class="abs mono" style="left:411px;top:764px;height:218px;overflow:hidden">......Çw(.*.h.Çw
4.6.0.Çw.. ...Çw
....ô.Çw....Ø.Çw
 .&quot;.´.Çw0.2...Çw
,...P.Çw .&quot;.,.Çw
......Çw....ü.Çw
......Çw....._Çw
....´.Çw......Çw
....h.Çw....x.Çw
......Çw....p.Çw
....°.Çw....|ÀÇw
....Ô.Çw........
l.Çw@...........
@.Êw..Êw....`ÀÇw
....HÀÇw....È.Çw
.... .Çw....P.Çw
.ÎÊw.¸Êw.IÖw`KÖw
 |ÊwàKÖw..Íw.IÖw
Ð|ÊwÀKÖw.Îw.ÎÊw</div>
<div class="abs" style="left:69px;top:764px;width:1px;height:218px;background:#808080"></div>
<div class="abs" style="left:154px;top:764px;width:1px;height:218px;background:#808080"></div>
<div class="abs" style="left:238px;top:764px;width:1px;height:218px;background:#808080"></div>
<div class="abs" style="left:322px;top:764px;width:1px;height:218px;background:#808080"></div>
<div class="abs" style="left:406px;top:764px;width:1px;height:218px;background:#808080"></div>
<div class="abs" style="left:526px;top:764px;width:1px;height:218px;background:#808080"></div>
<div class="sb" style="left:1317px;top:746px;width:19px;height:236px;border-left:1px solid #808080"></div>
<svg class="abs" style="left:1318px;top:965px" width="17" height="17" viewBox="0 0 17 17"><path d="M5 6.500l3.500 3.500 3.500-3.500" stroke="#505050" stroke-width="2" fill="none"/></svg>
<div class="pane" style="left:1343px;top:721px;width:573px;height:267px;border:1px solid #808080;border-right:2px solid #808080"></div>
<div class="abs" style="left:1345px;top:722px;width:552px;height:12px;background:#c0c0c0"></div>
<div class="abs mono g" style="left:1658px;top:733px">60FCD0
60FCD0</div>
<div class="abs mono g" style="left:1348px;top:949px;height:21px;overflow:hidden">0060FA88
0060FA8C</div>
<div class="abs mono g" style="left:1412px;top:949px;height:21px;overflow:hidden">00000000
0072F168</div>
<div class="abs" style="left:1407px;top:722px;width:1px;height:248px;background:#808080"></div>
<div class="abs" style="left:1471px;top:722px;width:1px;height:248px;background:#808080"></div>
<div class="sb" style="left:1897px;top:722px;width:17px;height:248px"></div>
<div class="thumb" style="left:1898px;top:921px;width:15px;height:18px"></div>
<div class="sb" style="left:1345px;top:970px;width:569px;height:17px"></div>
<div class="thumb" style="left:1361px;top:971px;width:151px;height:15px"></div>
<svg class="abs" style="left:1897px;top:722px" width="17" height="17" viewBox="0 0 17 17"><path d="M5 10.500l3.500-3.500 3.500 3.500" stroke="#505050" stroke-width="2" fill="none"/></svg>
<svg class="abs" style="left:1897px;top:953px" width="17" height="17" viewBox="0 0 17 17"><path d="M5 6.500l3.500 3.500 3.500-3.500" stroke="#505050" stroke-width="2" fill="none"/></svg>
<svg class="abs" style="left:1344px;top:970px" width="17" height="17" viewBox="0 0 17 17"><path d="M10.500 5l-3.500 3.500 3.500 3.500" stroke="#505050" stroke-width="2" fill="none"/></svg>
<svg class="abs" style="left:1880px;top:970px" width="17" height="17" viewBox="0 0 17 17"><path d="M6.500 5l3.500 3.500-3.500 3.500" stroke="#505050" stroke-width="2" fill="none"/></svg>
<div class="abs ui" style="left:2px;top:997px;font-size:11.9px">Command:</div>
<div class="abs" style="left:64px;top:994px;width:1784px;height:21px;background:#fff;border:1px solid #a0a0a0"></div>
<div class="abs ui" style="left:1849px;top:994px;width:69px;height:21px;background:#e1e1e1;border-top:1px solid #c8c8c8;border-bottom:1px solid #c8c8c8;font-size:12px;padding:3px 0 0 5px">Default</div>
<svg class="abs" style="left:1905px;top:1002px" width="9" height="6"><path d="M0 0h8l-4 4.500z" fill="#222"/></svg>
<div class="abs" style="left:0;top:1016px;width:1918px;height:23px;background:#c0c0c0"></div>
<div class="abs ui" style="left:2px;top:1019px;width:65px;height:19px;background:#ffff00;color:#e00000;text-align:center;font-size:12px;line-height:19px">Paused</div>
<div class="abs ui" style="left:72px;top:1019px;width:1630px;height:19px;background:#c0c0c0;border-left:1px solid #808080;border-top:1px solid #a8a8a8;font-size:12px;line-height:19px;padding-left:4px">First chance exception on 496E1636 (C0000005, EXCEPTION_ACCESS_VIOLATION)!</div>
<div class="abs ui" style="left:1708px;top:1019px;width:210px;height:19px;background:#c0c0c0;border-left:1px solid #808080;border-top:1px solid #a8a8a8;font-size:12.45px;line-height:19px;padding-left:5px">Time Wasted Debugging: 0:10:20:41</div>
<div class="abs" style="left:0;top:1039px;width:1918px;height:59px;background:#fff"></div>
<div class="abs" style="left:723px;top:175px;width:1168px;height:412px;background:#fff;box-shadow:0 3px 14px rgba(0,0,0,.3);border:1px solid #aaa"></div>
<div class="abs ui" style="left:753px;top:184px;color:#999;font-size:11.9px">D:\Fuzzing\Vulnserver\vulnserver.exe</div>
<svg class="abs" style="left:731px;top:183px" width="17" height="14" viewBox="0 0 17 14"><rect x=".5" y=".5" width="16" height="13" fill="#e8e8e8" stroke="#999"/><rect x="2" y="3" width="9" height="9" fill="#2f6f6f"/><rect x="12" y="3" width="3" height="5" fill="#999"/></svg>
<svg class="abs" style="left:1760px;top:177px" width="130" height="28" viewBox="0 0 130 28" fill="none" stroke="#888" stroke-width="1"><path d="M11 13.500h11"/><path d="M56.500 8.500h9v9h-9z"/><path d="M101 8l10 10M111 8l-10 10"/></svg>
<div class="abs" style="left:724px;top:206px;width:1149px;height:381px;background:#000"></div>
<div class="abs" style="left:1873px;top:206px;width:17px;height:381px;background:#f0f0f0"></div>
<div class="thumb" style="left:1874px;top:224px;width:15px;height:17px"></div>
<svg class="abs" style="left:1873px;top:207px" width="17" height="17" viewBox="0 0 17 17"><path d="M5 10.500l3.500-3.500 3.500 3.500" stroke="#505050" stroke-width="2" fill="none"/></svg>
<svg class="abs" style="left:1873px;top:570px" width="17" height="17" viewBox="0 0 17 17"><path d="M5 6.500l3.500 3.500 3.500-3.500" stroke="#505050" stroke-width="2" fill="none"/></svg>
<div class="abs con" style="left:724px;top:207px">Starting vulnserver version 1.00
Called essential function dll version 1.00

This is vulnerable software!
Do not allow access from untrusted systems or networks!

Waiting for client connections...
Received a client connection from 127.0.0.1:55045
Waiting for client connections...</div>
<div class="abs" style="left:810px;top:541px;width:859px;height:412px;background:#fff;box-shadow:0 3px 16px rgba(0,0,0,.28);border:1px solid #3c8cdc"></div>
<div class="abs ui" style="left:840px;top:550px;color:#000;font-size:11.7px">Windows PowerShell</div>
<svg class="abs" style="left:818px;top:549px" width="17" height="14" viewBox="0 0 17 14"><path d="M3 0h14l-3 14H0z" fill="#2f6fd0"/><path d="M4.500 3.500l4 3.500-4 3.500M9 11h4" stroke="#fff" stroke-width="1.500" fill="none"/></svg>
<svg class="abs" style="left:1530px;top:543px" width="138" height="28" viewBox="0 0 138 28" fill="none" stroke="#000" stroke-width="1.2"><path d="M18 13.500h11"/><path d="M63.500 8.500h9v9h-9z"/><path d="M109 8l10 10M119 8l-10 10"/></svg>
<div class="abs" style="left:811px;top:572px;width:840px;height:380px;background:#012456"></div>
<div class="abs" style="left:1651px;top:572px;width:17px;height:380px;background:#f0f0f0"></div>
<div class="thumb" style="left:1652px;top:589px;width:15px;height:17px"></div>
<svg class="abs" style="left:1651px;top:572px" width="17" height="17" viewBox="0 0 17 17"><path d="M5 10.500l3.500-3.500 3.500 3.500" stroke="#505050" stroke-width="2" fill="none"/></svg>
<svg class="abs" style="left:1651px;top:935px" width="17" height="17" viewBox="0 0 17 17"><path d="M5 6.500l3.500 3.500 3.500-3.500" stroke="#505050" stroke-width="2" fill="none"/></svg>
<div class="abs mono" style="left:811px;top:571px;color:#eee">PS D:\Fuzzing\Vulnserver&gt; <span style="color:#ffff00">type</span> D:\Temporal\sample.dat |<span style="color:#ffff00">nc</span> localhost 9999
Welcome to Vulnerable Server! Enter HELP for help.</div>
<svg class="abs" style="left:0;top:0;mix-blend-mode:multiply;z-index:50;pointer-events:none" width="1918" height="1098" viewBox="0 0 1918 1098"><path d="M980.8 550.8C982.1 546.4 977.3 544.7 988.5 543.1C999.6 541.6 1019.5 541.8 1047.6 541.4C1075.7 541.0 1124.2 540.8 1157.1 540.9C1189.9 541.1 1219.1 541.1 1244.7 542.0C1270.2 543.0 1292.8 544.1 1310.3 546.4C1327.9 548.8 1341.2 553.2 1349.8 556.3C1358.3 559.4 1359.7 558.5 1361.8 565.0C1363.9 571.6 1367.4 586.9 1362.5 595.7C1357.5 604.4 1344.6 611.6 1332.2 617.6C1319.9 623.6 1310.3 629.8 1288.4 631.8C1266.5 633.8 1230.1 630.9 1200.9 629.6C1171.7 628.4 1138.8 626.7 1113.3 624.2C1087.7 621.6 1065.8 617.4 1047.6 614.3C1029.3 611.2 1014.0 609.7 1003.8 605.5C993.6 601.3 990.1 595.1 986.3 589.1C982.4 583.1 981.7 575.8 980.8 569.4C979.9 563.0 979.5 555.2 980.8 550.8ZM989.6 565.0C991.0 561.9 989.7 558.2 999.4 557.4C1009.1 556.6 1033.9 559.3 1047.6 560.2C1061.3 561.1 1075.5 563.9 1081.5 562.8C1087.5 561.8 1083.2 556.6 1083.7 554.1C1084.3 551.6 1068.9 548.9 1084.8 548.0C1100.7 547.0 1152.3 548.1 1179.0 548.6C1205.6 549.1 1224.6 549.5 1244.7 550.8C1264.7 552.1 1284.8 553.9 1299.4 556.3C1314.0 558.6 1323.1 560.8 1332.2 565.0C1341.4 569.2 1354.1 576.3 1354.1 581.5C1354.1 586.6 1339.5 591.5 1332.2 595.7C1324.9 599.9 1321.3 603.5 1310.3 606.6C1299.4 609.7 1284.8 613.4 1266.5 614.3C1248.3 615.2 1226.4 613.4 1200.9 612.1C1175.3 610.8 1138.8 609.0 1113.3 606.6C1087.7 604.3 1065.8 600.8 1047.6 597.9C1029.3 595.0 1013.3 592.8 1003.8 589.1C994.3 585.5 993.0 580.0 990.7 576.0C988.3 572.0 988.1 568.1 989.6 565.0Z" fill="#ffff00" fill-rule="evenodd"/><g fill="none" stroke="#ffff00" stroke-width="12" stroke-linecap="butt" stroke-linejoin="round"><path d="M322.9 940.5C329.5 940.7 349.2 941.1 362.3 941.6C375.5 942.2 389.0 942.5 401.7 943.8C414.5 945.1 425.5 946.7 439.0 949.3C452.5 951.8 468.2 956.0 482.8 959.1C497.4 962.2 513.4 964.6 526.5 967.9C539.7 971.2 551.4 974.4 561.6 978.8C571.8 983.2 581.8 989.0 587.9 994.2C593.9 999.3 596.4 1003.6 597.7 1009.5C599.0 1015.3 598.6 1023.0 595.5 1029.2C592.4 1035.4 588.8 1041.2 579.1 1046.7C569.4 1052.2 551.7 1056.9 537.5 1062.0C523.3 1067.1 510.1 1073.0 493.7 1077.4C477.3 1081.7 455.4 1086.1 439.0 1088.3C422.5 1090.5 409.8 1091.2 395.2 1090.5C380.6 1089.8 366.0 1087.6 351.4 1083.9C336.8 1080.3 320.4 1074.1 307.6 1068.6C294.8 1063.1 283.1 1057.3 274.7 1051.1C266.3 1044.9 261.6 1038.3 257.2 1031.4C252.8 1024.4 250.5 1016.8 248.5 1009.5C246.5 1002.2 245.5 993.8 245.2 987.6C244.8 981.4 243.9 976.3 246.3 972.3C248.6 968.2 252.8 965.3 259.4 963.5C266.0 961.7 275.8 961.3 285.7 961.3C295.5 961.3 307.6 962.0 318.5 963.5C329.5 965.0 340.8 967.5 351.4 970.1C362.0 972.6 376.9 977.4 382.0 978.8"/><path d="M322.9 940.5C329.5 940.7 349.2 941.1 362.3 941.6C375.5 942.2 389.0 942.5 401.7 943.8C414.5 945.1 425.5 946.7 439.0 949.3C452.5 951.8 468.2 956.0 482.8 959.1C497.4 962.2 513.4 964.6 526.5 967.9C539.7 971.2 551.4 974.4 561.6 978.8C571.8 983.2 581.8 989.0 587.9 994.2C593.9 999.3 596.4 1003.6 597.7 1009.5C599.0 1015.3 598.6 1023.0 595.5 1029.2C592.4 1035.4 588.8 1041.2 579.1 1046.7C569.4 1052.2 551.7 1056.9 537.5 1062.0C523.3 1067.1 510.1 1073.0 493.7 1077.4C477.3 1081.7 455.4 1086.1 439.0 1088.3C422.5 1090.5 409.8 1091.2 395.2 1090.5C380.6 1089.8 366.0 1087.6 351.4 1083.9C336.8 1080.3 320.4 1074.1 307.6 1068.6C294.8 1063.1 283.1 1057.3 274.7 1051.1C266.3 1044.9 261.6 1038.3 257.2 1031.4C252.8 1024.4 250.5 1016.8 248.5 1009.5C246.5 1002.2 245.5 993.8 245.2 987.6C244.8 981.4 243.9 976.3 246.3 972.3C248.6 968.2 252.8 965.3 259.4 963.5C266.0 961.7 275.8 961.3 285.7 961.3C295.5 961.3 307.6 962.0 318.5 963.5C329.5 965.0 340.8 967.5 351.4 970.1C362.0 972.6 376.9 977.4 382.0 978.8" transform="translate(0,3.5)"/><path d="M322.9 940.5C329.5 940.7 349.2 941.1 362.3 941.6C375.5 942.2 389.0 942.5 401.7 943.8C414.5 945.1 425.5 946.7 439.0 949.3C452.5 951.8 468.2 956.0 482.8 959.1C497.4 962.2 513.4 964.6 526.5 967.9C539.7 971.2 551.4 974.4 561.6 978.8C571.8 983.2 581.8 989.0 587.9 994.2C593.9 999.3 596.4 1003.6 597.7 1009.5C599.0 1015.3 598.6 1023.0 595.5 1029.2C592.4 1035.4 588.8 1041.2 579.1 1046.7C569.4 1052.2 551.7 1056.9 537.5 1062.0C523.3 1067.1 510.1 1073.0 493.7 1077.4C477.3 1081.7 455.4 1086.1 439.0 1088.3C422.5 1090.5 409.8 1091.2 395.2 1090.5C380.6 1089.8 366.0 1087.6 351.4 1083.9C336.8 1080.3 320.4 1074.1 307.6 1068.6C294.8 1063.1 283.1 1057.3 274.7 1051.1C266.3 1044.9 261.6 1038.3 257.2 1031.4C252.8 1024.4 250.5 1016.8 248.5 1009.5C246.5 1002.2 245.5 993.8 245.2 987.6C244.8 981.4 243.9 976.3 246.3 972.3C248.6 968.2 252.8 965.3 259.4 963.5C266.0 961.7 275.8 961.3 285.7 961.3C295.5 961.3 307.6 962.0 318.5 963.5C329.5 965.0 340.8 967.5 351.4 970.1C362.0 972.6 376.9 977.4 382.0 978.8" transform="translate(0,-3.5)"/></g><path d="M322.9 940.5C329.5 940.7 349.2 941.1 362.3 941.6C375.5 942.2 389.0 942.5 401.7 943.8C414.5 945.1 432.8 948.4 439.0 949.3" fill="none" stroke="#ffff00" stroke-width="12" transform="translate(0,6)"/></svg></body></html>
